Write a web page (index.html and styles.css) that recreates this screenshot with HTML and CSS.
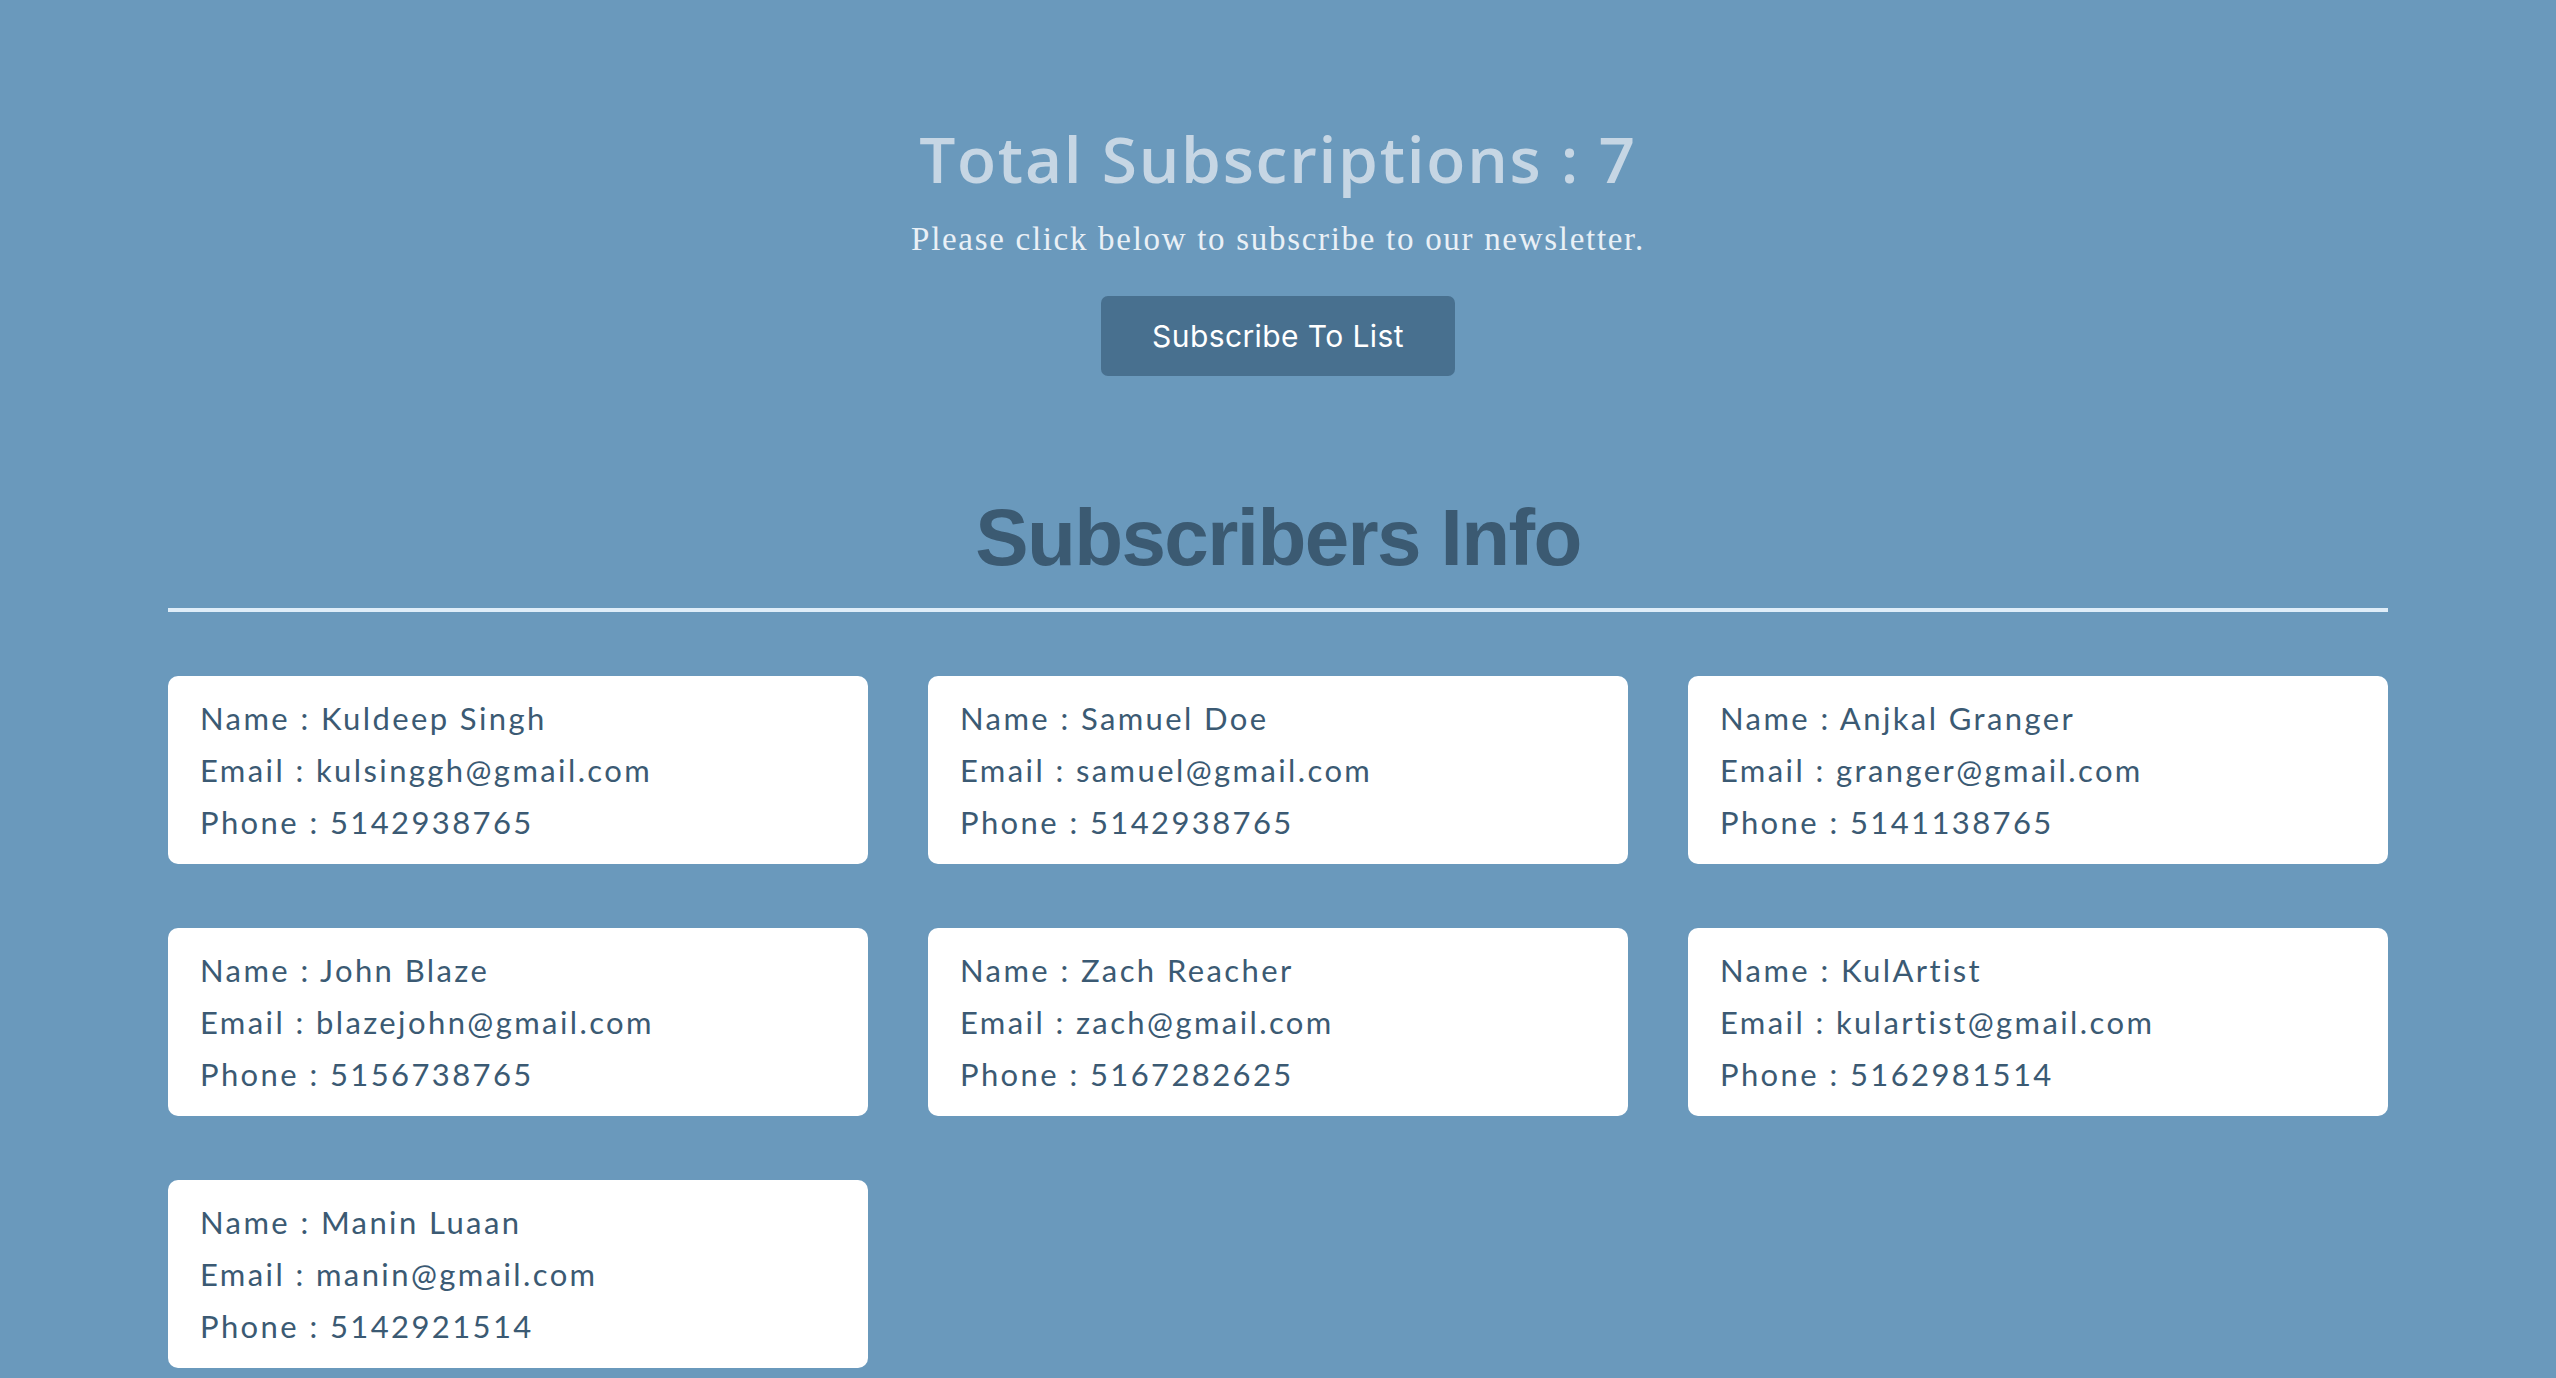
FILE: index.html
```html
<!DOCTYPE html>
<html>

<head>
  <link rel="stylesheet" href="styles.css">
</head>

<body>
  <!-- Subscription header -->
  <div class="header">
    <h1 class="total">Total Subscriptions : 7</h1>
    <p class="subtitle">Please click below to subscribe to our newsletter.</p>
    <button class="subscribe-btn">Subscribe To List</button>
  </div>

  <!-- Subscriber list -->
  <div class="subscribers">
    <h2 class="subscribers-title">Subscribers Info</h2>
    <hr class="divider">

    <div class="card-grid">
      <div class="card">
        <p>Name : Kuldeep Singh</p>
        <p>Email : kulsinggh@gmail.com</p>
        <p>Phone : 5142938765</p>
      </div>
      <div class="card">
        <p>Name : Samuel Doe</p>
        <p>Email : samuel@gmail.com</p>
        <p>Phone : 5142938765</p>
      </div>
      <div class="card">
        <p>Name : Anjkal Granger</p>
        <p>Email : granger@gmail.com</p>
        <p>Phone : 5141138765</p>
      </div>
      <div class="card">
        <p>Name : John Blaze</p>
        <p>Email : blazejohn@gmail.com</p>
        <p>Phone : 5156738765</p>
      </div>
      <div class="card">
        <p>Name : Zach Reacher</p>
        <p>Email : zach@gmail.com</p>
        <p>Phone : 5167282625</p>
      </div>
      <div class="card">
        <p>Name : KulArtist</p>
        <p>Email : kulartist@gmail.com</p>
        <p>Phone : 5162981514</p>
      </div>
      <div class="card">
        <p>Name : Manin Luaan</p>
        <p>Email : manin@gmail.com</p>
        <p>Phone : 5142921514</p>
      </div>
    </div>
  </div>
</body>

</html>
```

FILE: styles.css
```css
/* Page */
body {
  margin: 0;
  background-color: #6a99bc;
  font-family: "Lato", "Open Sans", sans-serif;
}

/* Header with total and subscribe button */
.header {
  display: flex;
  flex-direction: column;
  align-items: center;
  padding-top: 119px;
}

.total {
  margin: 0;
  font-family: "Open Sans", sans-serif;
  font-size: 64px;
  font-weight: 600;
  line-height: 80px;
  letter-spacing: 1.75px;
  color: #c6d6e4;
}

.subtitle {
  margin: 20px 0 0;
  font-family: "Liberation Serif", serif;
  font-size: 33px;
  line-height: 40px;
  letter-spacing: 1.7px;
  color: #e9f0f6;
}

.subscribe-btn {
  margin-top: 37px;
  height: 80px;
  padding: 0 51px;
  border: none;
  border-radius: 7px;
  background-color: #48708f;
  color: #ffffff;
  font-family: "Inter", sans-serif;
  font-size: 30px;
  letter-spacing: 0.4px;
  cursor: pointer;
}

/* Subscribers section */
.subscribers {
  margin: 114px 168px 0;
}

.subscribers-title {
  margin: 0;
  text-align: center;
  font-family: "Liberation Sans", sans-serif;
  font-size: 80px;
  font-weight: bold;
  line-height: 96px;
  letter-spacing: -1.6px;
  color: #3b5a72;
}

.divider {
  margin: 22px 0 0;
  height: 4px;
  border: none;
  background-color: #dfedf8;
}

.card-grid {
  display: grid;
  grid-template-columns: repeat(3, 1fr);
  column-gap: 60px;
  row-gap: 64px;
  margin-top: 64px;
  padding-bottom: 40px;
}

.card {
  padding: 16px 32px;
  background-color: #ffffff;
  border-radius: 10px;
  color: #3b5a73;
}

.card p {
  margin: 0;
  font-size: 31px;
  line-height: 52px;
  letter-spacing: 2.4px;
}
```
